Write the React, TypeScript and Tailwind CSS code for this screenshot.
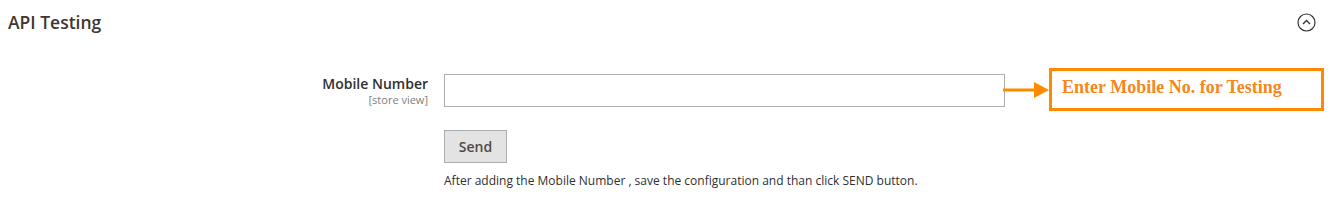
import React, { useState } from 'react';

const sans = { fontFamily: '"Open Sans", "Liberation Sans", sans-serif' };

function CollapseIcon() {
  return (
    <svg width="19" height="19" viewBox="0 0 19 19" fill="none">
      <circle cx="9.5" cy="9.5" r="8.5" stroke="#303030" strokeWidth="1.2" />
      <path d="M6 11 L9.5 7.5 L13 11" stroke="#303030" strokeWidth="1.3" />
    </svg>
  );
}

function Callout() {
  return (
    <div className="flex items-center -mt-[2px]">
      <svg width="46" height="18" viewBox="0 0 46 18" className="-ml-[2px]">
        <line x1="0" y1="9" x2="32" y2="9" stroke="#ff8a00" strokeWidth="3" />
        <polygon points="31,1 46,9 31,17" fill="#ff8a00" />
      </svg>
      <div
        className="w-[275px] h-[43px] border-[3px] border-[#ff8a00] pl-[10px] pt-[3px] text-[18px] font-bold text-[#f7861b]"
        style={{ fontFamily: '"Liberation Serif", serif' }}
      >
        Enter Mobile No. for Testing
      </div>
    </div>
  );
}

export default function App() {
  const [mobile, setMobile] = useState('');

  return (
    <div className="w-[1340px] h-[211px] bg-white text-[#303030]" style={sans}>
      <div className="flex items-center justify-between pl-[8px] pr-[24px] pt-[9px]">
        <h3 className="text-[17.5px] font-semibold text-[#41362f] leading-[26px]">API Testing</h3>
        <CollapseIcon />
      </div>

      <div className="flex mt-[39px]">
        <div className="w-[428px] text-right pt-[1px]">
          <div className="text-[14px] font-semibold leading-[18px]">Mobile Number</div>
          <div className="text-[11px] text-[#808080] leading-[14px]">[store view]</div>
        </div>
        <div className="ml-[16px]">
          <div className="flex items-center -mt-[6px]">
            <input
              type="text"
              value={mobile}
              onChange={(e) => setMobile(e.target.value)}
              className="w-[561px] h-[33px] mt-[6px] mb-[6px] border border-[#adadad] bg-white px-2 text-[14px] outline-none"
            />
            <Callout />
          </div>
          <button
            type="button"
            className="mt-[17px] w-[63px] h-[33px] border border-[#adadad] bg-[#e3e3e3] text-[14px] font-semibold text-[#514943]"
          >
            Send
          </button>
          <p className="mt-[10px] text-[12px] leading-[16px]">
            After adding the Mobile Number , save the configuration and than click SEND button.
          </p>
        </div>
      </div>
    </div>
  );
}
